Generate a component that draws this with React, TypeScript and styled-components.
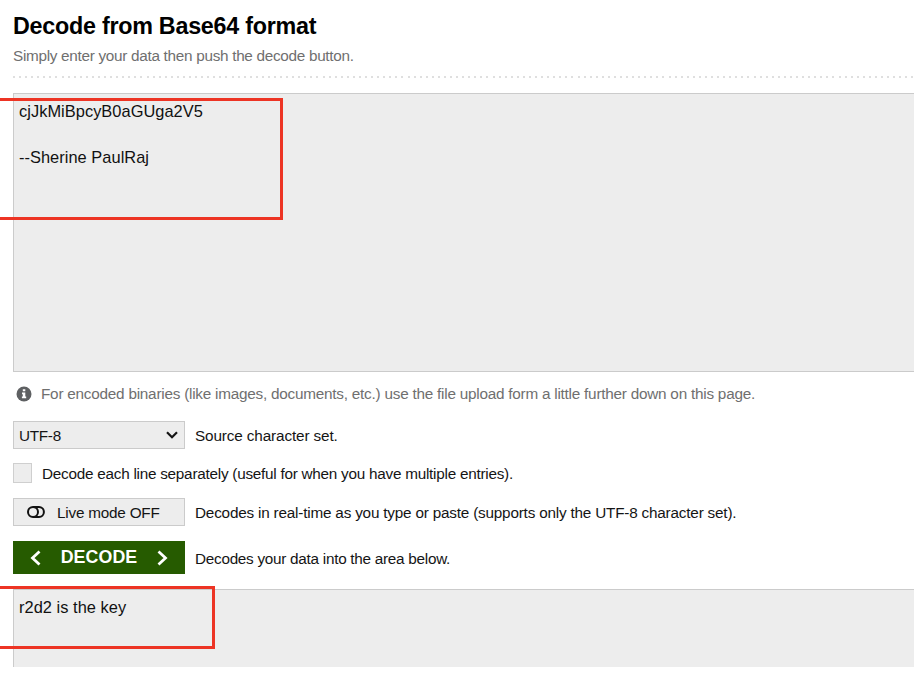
import React from "react";
import styled, { createGlobalStyle } from "styled-components";

const GlobalStyle = createGlobalStyle`
  * { box-sizing: border-box; }
  html, body { margin: 0; padding: 0; background: #fff; overflow: hidden; }
  body { font-family: "Liberation Sans", Arial, sans-serif; color: #111; }
`;

const Page = styled.main`
  width: 914px;
  height: 674px;
  padding: 12px 0 7px 13px;
  display: flex;
  flex-direction: column;
  overflow: hidden;
`;

const Title = styled.h1`
  margin: 0;
  font-size: 23.3px;
  line-height: 28px;
  font-weight: 700;
  letter-spacing: -0.25px;
  color: #000;
  white-space: nowrap;
`;

const Subtitle = styled.p`
  margin: 3px 0 0;
  font-size: 15.3px;
  line-height: 26px;
  letter-spacing: -0.29px;
  color: #6f6f6f;
  white-space: nowrap;
`;

const Divider = styled.div`
  flex: none;
  height: 2px;
  margin: 7px 0 15px;
  background: repeating-linear-gradient(90deg, #dfdfdf 0 2px, transparent 2px 6.07px);
`;

const Field = styled.section<{ $height: number; $gap?: number }>`
  position: relative;
  flex: none;
  height: ${(p) => p.$height}px;
  margin-top: ${(p) => p.$gap ?? 0}px;
  padding: 6px 5px;
  background: #ededed;
  border: 1px solid #cbcbcb;
  border-right: 0;
  font-size: 16.4px;
  line-height: 23px;
  letter-spacing: 0.04px;
  color: #111;
  white-space: pre;
`;

const OutputField = styled(Field)`
  border-bottom: 0;
`;

const Highlight = styled.div<{ $top: number; $width: number; $height: number }>`
  position: absolute;
  left: -14px;
  top: ${(p) => p.$top}px;
  width: ${(p) => p.$width}px;
  height: ${(p) => p.$height}px;
  border: 3px solid #ed3424;
  border-left: 0;
`;

const Row = styled.div<{ $height: number; $top: number; $gap: number }>`
  flex: none;
  display: flex;
  align-items: center;
  height: ${(p) => p.$height}px;
  margin-top: ${(p) => p.$top}px;
  gap: ${(p) => p.$gap}px;
`;

const Label = styled.span<{ $muted?: boolean; $track?: number }>`
  font-size: 15.3px;
  line-height: 20px;
  padding-top: ${(p) => (p.$muted ? 0 : 2)}px;
  letter-spacing: ${(p) => p.$track ?? -0.25}px;
  color: ${(p) => (p.$muted ? "#6f6f6f" : "#151515")};
  white-space: nowrap;
`;

const Control = styled.button`
  width: 172px;
  height: 28px;
  flex: none;
  display: flex;
  align-items: center;
  padding: 0 6px 0 5px;
  margin: 0;
  background: #ededed;
  border: 1px solid #cbcbcb;
  border-radius: 0;
  font-family: inherit;
  font-size: 15.3px;
  letter-spacing: -0.3px;
  color: #151515;
`;

const ControlText = styled.span`
  line-height: 20px;
  padding-top: 2px;
`;

const SelectControl = styled(Control)`
  justify-content: space-between;
`;

const ToggleControl = styled(Control)`
  padding-left: 13px;
  gap: 12px;
  letter-spacing: -0.22px;
`;

const DecodeButton = styled(Control)`
  height: 33px;
  padding: 0 17px 0 17px;
  justify-content: space-between;
  background: #265b00;
  border: 0;
  color: #fff;
  font-size: 17.8px;
  letter-spacing: 0.1px;
  font-weight: 700;
`;

const Checkbox = styled.span`
  width: 19px;
  height: 20px;
  flex: none;
  background: #ededed;
  border: 1px solid #cfcfcf;
`;

const NoteIcon = styled.span`
  display: flex;
  padding-left: 3px;
`;

const InfoIcon = () => (
  <svg width="16" height="16" viewBox="0 0 16 16">
    <circle cx="8" cy="8" r="7.5" fill="#5e6062" />
    <path d="M6.8 3.2h2.5v2.1H6.8zM6 6.5h3.3v4.1h.9v1.7H5.9v-1.7h.9V8.2H6z" fill="#fff" />
  </svg>
);

const ChevronDown = () => (
  <svg width="12" height="8" viewBox="0 0 12 8" fill="none" stroke="#151515" strokeWidth="2.2">
    <path d="M1 1.2l5 5 5-5" />
  </svg>
);

const ToggleIcon = () => (
  <svg width="18" height="12" viewBox="0 0 18 12" fill="none" stroke="#111" strokeWidth="2">
    <ellipse cx="6" cy="6" rx="5" ry="4.9" />
    <path d="M6 1.1h6a4.9 4.9 0 0 1 0 9.8H6" />
  </svg>
);

const Chevron = ({ right }: { right?: boolean }) => (
  <svg width="11" height="16" viewBox="0 0 11 16" fill="none" stroke="#fff" strokeWidth="2.8">
    <path d={right ? "M1.5 1.5L8.5 8l-7 6.5" : "M9.5 1.5L2.5 8l7 6.5"} />
  </svg>
);

export default function App() {
  return (
    <>
      <GlobalStyle />
      <Page>
        <Title>Decode from Base64 format</Title>
        <Subtitle>Simply enter your data then push the decode button.</Subtitle>
        <Divider />
        <Field $height={279}>
          {"cjJkMiBpcyB0aGUga2V5\n\n--Sherine PaulRaj"}
          <Highlight $top={4} $width={283} $height={122} />
        </Field>
        <Row $height={20} $top={12} $gap={9}>
          <NoteIcon><InfoIcon /></NoteIcon>
          <Label $muted $track={-0.23}>For encoded binaries (like images, documents, etc.) use the file upload form a little further down on this page.</Label>
        </Row>
        <Row $height={28} $top={17} $gap={10}>
          <SelectControl><ControlText>UTF-8</ControlText><ChevronDown /></SelectControl>
          <Label $track={-0.13}>Source character set.</Label>
        </Row>
        <Row $height={20} $top={14} $gap={10}>
          <Checkbox />
          <Label>Decode each line separately (useful for when you have multiple entries).</Label>
        </Row>
        <Row $height={28} $top={15} $gap={10}>
          <ToggleControl><ToggleIcon /><ControlText>Live mode OFF</ControlText></ToggleControl>
          <Label $track={-0.2}>Decodes in real-time as you type or paste (supports only the UTF-8 character set).</Label>
        </Row>
        <Row $height={33} $top={15} $gap={10}>
          <DecodeButton><Chevron /><span>DECODE</span><Chevron right /></DecodeButton>
          <Label $track={-0.27}>Decodes your data into the area below.</Label>
        </Row>
        <OutputField $height={78} $gap={15}>
          r2d2 is the key
          <Highlight $top={-4} $width={215} $height={63} />
        </OutputField>
      </Page>
    </>
  );
}
